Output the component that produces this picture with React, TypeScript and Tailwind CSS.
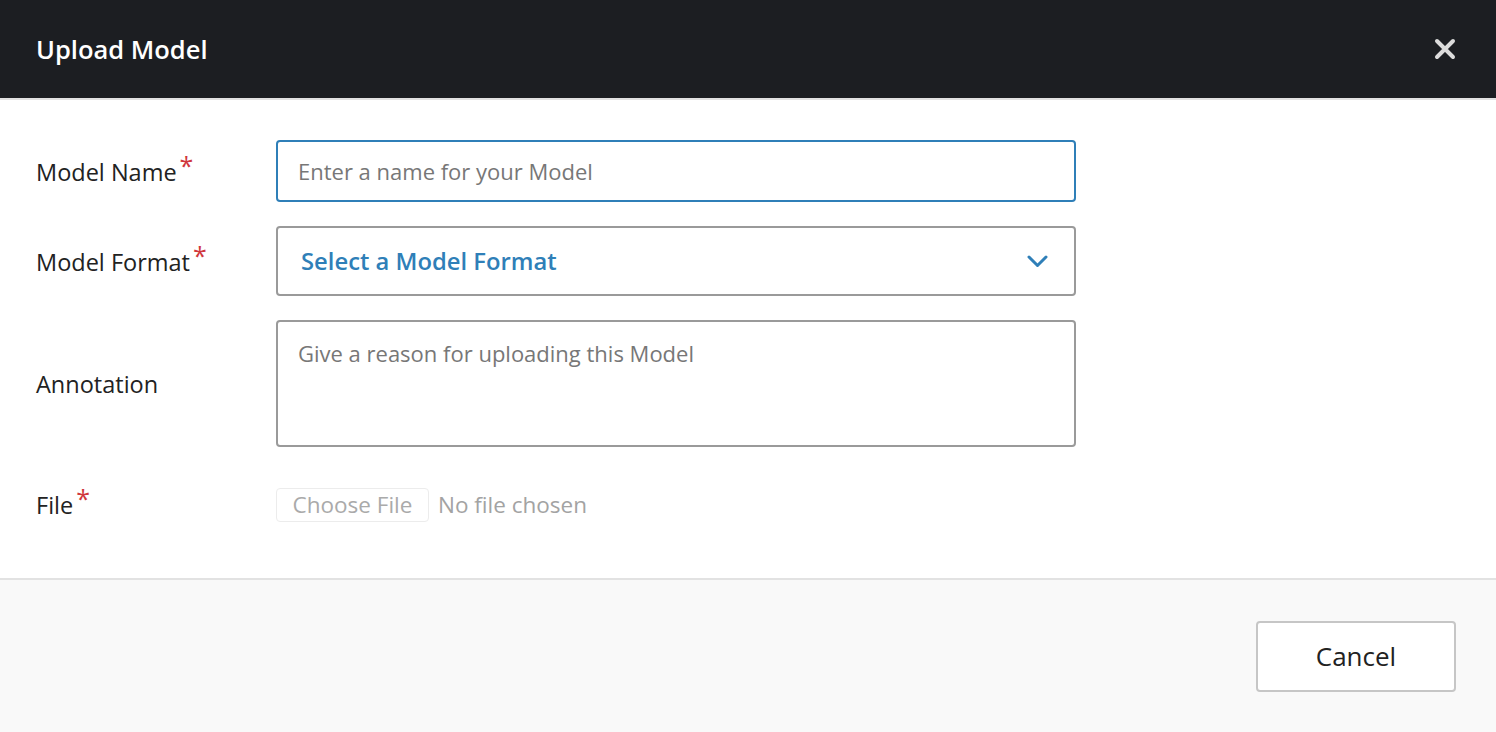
const font = { fontFamily: '"Open Sans", "Noto Sans", sans-serif' };

function Required() {
    return <span className="relative -top-[6px] ml-[3px] text-[25px] leading-none text-[#d0363c]">*</span>;
}

export default function App() {
    return (
        <div className="w-[1496px] h-[732px] bg-white flex flex-col text-[#222]" style={font}>
            {/* Header */}
            <div className="h-[100px] shrink-0 bg-[#1c1e22] border-b-2 border-[#e2e2e2] flex items-center justify-between pl-[36px] pr-[40px]">
                <h1 className="text-[25.5px] font-semibold text-white">Upload Model</h1>
                <button className="text-[#dcdcdc]" aria-label="Close">
                    <svg width="22" height="22" viewBox="0 0 22 22">
                        <path d="M3 3 L19 19 M19 3 L3 19" stroke="currentColor" strokeWidth="4" strokeLinecap="round" />
                    </svg>
                </button>
            </div>

            {/* Form */}
            <div className="flex-1 pt-[40px] pl-[36px] flex flex-col gap-[24px]">
                <div className="flex items-center">
                    <label className="w-[240px] pt-[3px] text-[23.5px]">Model Name<Required /></label>
                    <input
                        className="w-[800px] h-[62px] border-2 border-[#2f7fb8] rounded-[4px] px-[20px] text-[22px] text-[#222] placeholder:text-[#777] outline-none"
                        placeholder="Enter a name for your Model"
                    />
                </div>
                <div className="flex items-center">
                    <label className="w-[240px] pt-[3px] text-[23.5px]">Model Format<Required /></label>
                    <div className="w-[800px] h-[70px] border-2 border-[#9a9a9a] rounded-[4px] pl-[23px] pr-[26px] flex items-center justify-between">
                        <span className="pt-[2px] text-[23.8px] font-semibold text-[#2f7fb8]">Select a Model Format</span>
                        <svg width="21" height="13" viewBox="0 0 21 13" className="text-[#2f7fb8] mt-[1px]">
                            <path d="M2 2 L10.5 10.5 L19 2" fill="none" stroke="currentColor" strokeWidth="3" strokeLinecap="round" strokeLinejoin="round" />
                        </svg>
                    </div>
                </div>
                <div className="flex items-center">
                    <label className="w-[240px] pt-[2px] text-[23.5px]">Annotation</label>
                    <textarea
                        className="w-[800px] h-[127px] border-2 border-[#9a9a9a] rounded-[4px] px-[20px] pt-[15px] text-[22px] placeholder:text-[#777] outline-none resize-none"
                        placeholder="Give a reason for uploading this Model"
                    />
                </div>
                <div className="flex items-center mt-[15px]">
                    <label className="w-[240px] pt-[2px] text-[23.5px]">File<Required /></label>
                    <div className="flex items-center gap-[9px]">
                        <span className="h-[34px] w-[153px] border border-[#ececec] rounded-[4px] text-[22.5px] text-[#aaa] flex items-center justify-center">Choose File</span>
                        <span className="text-[22.5px] text-[#a3a3a3]">No file chosen</span>
                    </div>
                </div>
            </div>

            {/* Footer */}
            <div className="h-[154px] shrink-0 bg-[#f9f9f9] border-t-2 border-[#e2e2e2] flex items-center justify-end pr-[40px]">
                <button className="w-[200px] h-[71px] bg-white border-2 border-[#c6c6c6] rounded-[4px] text-[26px] text-[#222]">Cancel</button>
            </div>
        </div>
    );
}
